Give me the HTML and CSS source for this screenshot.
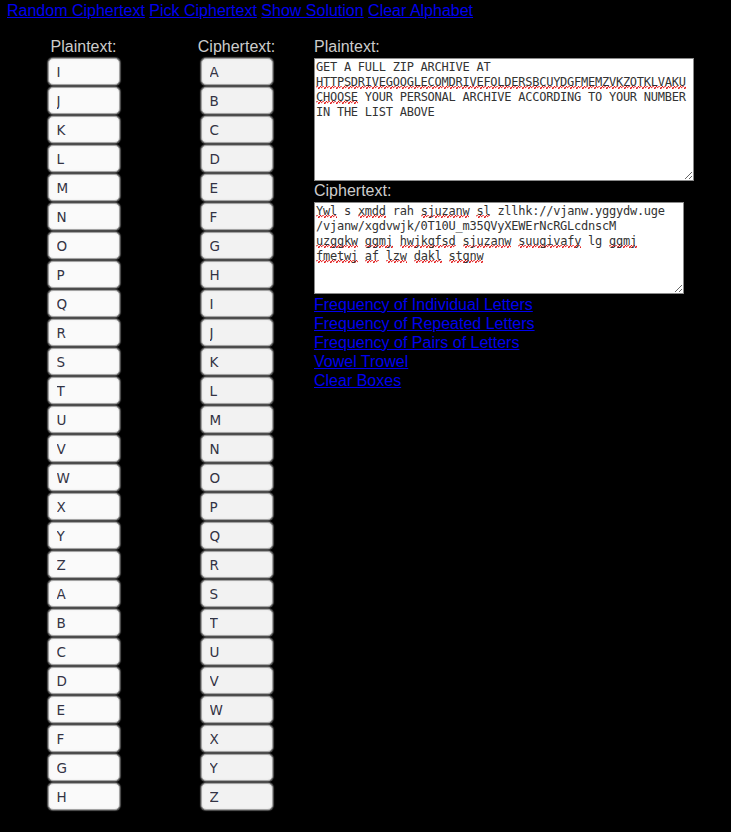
FILE: index.html
```html
<!DOCTYPE html>
<html lang="en">
<head>
<meta charset="utf-8">
<title>Cipher Solver</title>
<link rel="stylesheet" href="styles.css">
</head>
<body>
<nav class="topnav">
<a href="#">Random Ciphertext</a> <a href="#">Pick Ciphertext</a> <a href="#">Show Solution</a> <a href="#">Clear Alphabet</a>
</nav>
<main class="workspace">
  <section class="alpha-col plain-col">
    <div class="col-label">Plaintext:</div>
    <input class="letter plain" value="I">
    <input class="letter plain" value="J">
    <input class="letter plain" value="K">
    <input class="letter plain" value="L">
    <input class="letter plain" value="M">
    <input class="letter plain" value="N">
    <input class="letter plain" value="O">
    <input class="letter plain" value="P">
    <input class="letter plain" value="Q">
    <input class="letter plain" value="R">
    <input class="letter plain" value="S">
    <input class="letter plain" value="T">
    <input class="letter plain" value="U">
    <input class="letter plain" value="V">
    <input class="letter plain" value="W">
    <input class="letter plain" value="X">
    <input class="letter plain" value="Y">
    <input class="letter plain" value="Z">
    <input class="letter plain" value="A">
    <input class="letter plain" value="B">
    <input class="letter plain" value="C">
    <input class="letter plain" value="D">
    <input class="letter plain" value="E">
    <input class="letter plain" value="F">
    <input class="letter plain" value="G">
    <input class="letter plain" value="H">
  </section>
  <section class="alpha-col cipher-col">
    <div class="col-label">Ciphertext:</div>
    <input class="letter cipher" value="A" readonly>
    <input class="letter cipher" value="B" readonly>
    <input class="letter cipher" value="C" readonly>
    <input class="letter cipher" value="D" readonly>
    <input class="letter cipher" value="E" readonly>
    <input class="letter cipher" value="F" readonly>
    <input class="letter cipher" value="G" readonly>
    <input class="letter cipher" value="H" readonly>
    <input class="letter cipher" value="I" readonly>
    <input class="letter cipher" value="J" readonly>
    <input class="letter cipher" value="K" readonly>
    <input class="letter cipher" value="L" readonly>
    <input class="letter cipher" value="M" readonly>
    <input class="letter cipher" value="N" readonly>
    <input class="letter cipher" value="O" readonly>
    <input class="letter cipher" value="P" readonly>
    <input class="letter cipher" value="Q" readonly>
    <input class="letter cipher" value="R" readonly>
    <input class="letter cipher" value="S" readonly>
    <input class="letter cipher" value="T" readonly>
    <input class="letter cipher" value="U" readonly>
    <input class="letter cipher" value="V" readonly>
    <input class="letter cipher" value="W" readonly>
    <input class="letter cipher" value="X" readonly>
    <input class="letter cipher" value="Y" readonly>
    <input class="letter cipher" value="Z" readonly>
  </section>
  <section class="text-col">
    <div class="side-label">Plaintext:</div>
    <div class="textbox plain-box" role="textbox">GET A FULL ZIP ARCHIVE AT<br><span class="sp">HTTPSDRIVEGOOGLECOMDRIVEFOLDERSBCUYDGFMEMZVKZOTKLVAKU</span><br><span class="sp">CHOOSE</span> YOUR PERSONAL ARCHIVE ACCORDING TO YOUR NUMBER<br>IN THE LIST ABOVE</div>
    <div class="side-label">Ciphertext:</div>
    <div class="textbox cipher-box" role="textbox"><span class="sp">Ywl</span> s <span class="sp">xmdd</span> rah <span class="sp">sjuzanw</span> <span class="sp">sl</span> zllhk://vjanw.yggydw.uge<br>/vjanw/xgdvwjk/0T10U_m35QVyXEWErNcRGLcdnscM<br><span class="sp">uzggkw</span> <span class="sp">ggmj</span> <span class="sp">hwjkgfsd</span> <span class="sp">sjuzanw</span> <span class="sp">suugivafy</span> lg <span class="sp">ggmj</span><br><span class="sp">fmetwj</span> <span class="sp">af</span> <span class="sp">lzw</span> <span class="sp">dakl</span> <span class="sp">stgnw</span></div>
    <ul class="tools">
      <li><a href="#">Frequency of Individual Letters</a></li>
      <li><a href="#">Frequency of Repeated Letters</a></li>
      <li><a href="#">Frequency of Pairs of Letters</a></li>
      <li><a href="#">Vowel Trowel</a></li>
      <li><a href="#">Clear Boxes</a></li>
    </ul>
  </section>
</main>
</body>
</html>
```
FILE: styles.css
```css
html, body {
  margin: 0;
  padding: 0;
  background: #000;
}

body {
  font-family: "Liberation Sans", Arial, sans-serif;
  font-size: 16px;
  color: #cccccc;
}

a {
  color: #0000ee;
  text-decoration: underline;
}

.topnav {
  padding: 2px 0 0 7px;
  line-height: 18px;
  white-space: nowrap;
}

.workspace {
  display: flex;
  align-items: flex-start;
  margin-top: 18px;
}

.alpha-col {
  display: flex;
  flex-direction: column;
  align-items: center;
}

.plain-col {
  width: 167px;
}

.cipher-col {
  width: 139px;
}

.col-label {
  line-height: 18px;
  margin-bottom: 2px;
}

.letter {
  box-sizing: border-box;
  width: 72px;
  height: 27px;
  margin: 0 0 2px 0;
  padding: 0 0 0 8px;
  border: 1px solid #a3a3a3;
  border-radius: 5px;
  box-shadow: 0 0 1px 1px #555, inset 0 0 2px rgba(0, 0, 0, 0.1);
  font-family: "DejaVu Sans", sans-serif;
  font-size: 13.5px;
  color: #333344;
  outline: none;
}

.plain {
  background: #fafafa;
}

.cipher {
  background: #f2f2f2;
}

.text-col {
  margin-left: 8px;
  display: flex;
  flex-direction: column;
  align-items: flex-start;
}

.side-label {
  line-height: 18px;
  margin-bottom: 2px;
}

.textbox {
  box-sizing: border-box;
  background: #fff;
  border: 1px solid #8a8a8a;
  padding: 1px 1px;
  font-family: "DejaVu Sans Mono", monospace;
  font-size: 12px;
  letter-spacing: -0.25px;
  line-height: 15px;
  color: #333;
  white-space: nowrap;
  overflow: hidden;
  resize: both;
}

.plain-box {
  width: 380px;
  height: 123px;
  margin-bottom: 1px;
}

.cipher-box {
  width: 370px;
  height: 92px;
  margin-bottom: 1px;
}

.sp {
  background-image:
    linear-gradient(45deg, transparent 65%, #e01010 80%, transparent 90%),
    linear-gradient(135deg, transparent 5%, #e01010 15%, transparent 25%),
    linear-gradient(135deg, transparent 45%, #e01010 55%, transparent 65%),
    linear-gradient(45deg, transparent 35%, #e01010 40%, transparent 50%);
  background-size: 6px 3px;
  background-repeat: repeat-x;
  background-position: left bottom;
}

.tools {
  list-style: none;
  margin: 0;
  padding: 0;
  line-height: 19px;
}
```
